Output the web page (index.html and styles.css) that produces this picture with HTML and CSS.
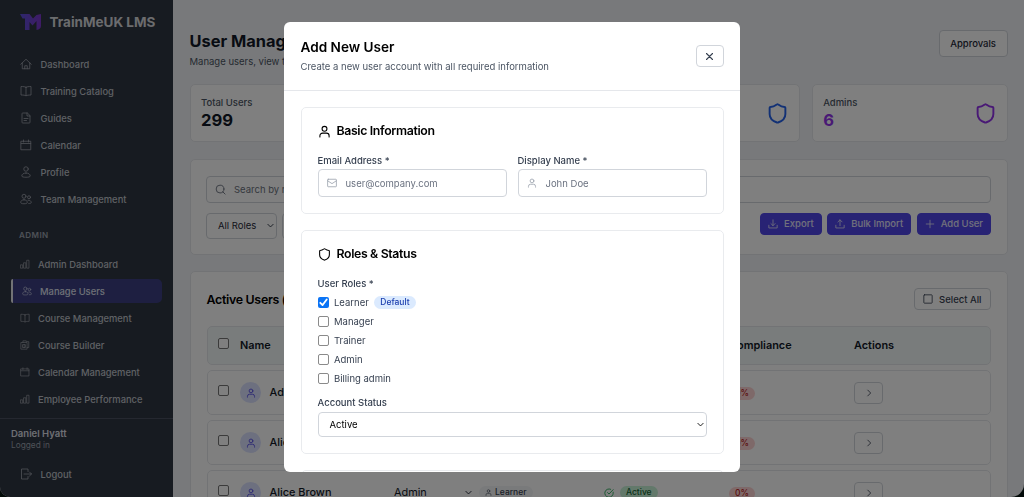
FILE: index.html
```
<!DOCTYPE html>
<html lang="en">
<head>
    <meta charset="UTF-8">
    <meta name="viewport" content="width=device-width, initial-scale=1.0">
    <title>TrainMeUK LMS - User Management</title>
    <link rel="stylesheet" href="styles.css">
</head>
<body>
    <svg class="sprite" aria-hidden="true">
        <symbol id="i-home" viewBox="0 0 24 24"><path d="M1.500 12.500 12 2.500l10.500 10M4.500 10v11.500h15V10M9.500 21.500v-6h5v6"/></symbol>
        <symbol id="i-book" viewBox="0 0 24 24"><path d="M12 4.500C10 3.500 7 3 2 3v17c5 0 8 .5 10 1.500 2-1 5-1.500 10-1.500V3c-5 0-8 .5-10 1.500zm0 0v17"/></symbol>
        <symbol id="i-file" viewBox="0 0 24 24"><path d="M14 2H5.500A1.500 1.500 0 0 0 4 3.500v17A1.500 1.500 0 0 0 5.500 22h13a1.500 1.500 0 0 0 1.500-1.500V8zM14 2v6h6M8 13h8M8 17h5"/></symbol>
        <symbol id="i-cal" viewBox="0 0 24 24"><path d="M2.500 4.500h19v17h-19zM2.500 9h19M7 2v4M17 2v4"/></symbol>
        <symbol id="i-profile" viewBox="0 0 24 24"><circle cx="12" cy="6" r="4.500"/><path d="M12 14c-5 0-8.500 2.500-8.500 6 0 1.500 3 2.500 8.500 2.500s8.500-1 8.500-2.500c0-3.500-3.500-6-8.500-6z"/></symbol>
        <symbol id="i-team" viewBox="0 0 24 24"><circle cx="8" cy="6.500" r="4"/><circle cx="18" cy="8.500" r="3"/><path d="M8 13.500c-4 0-6.500 2-6.500 5.500 0 1.500 2 2.500 6.500 2.500s6.500-1 6.500-2.500c0-3.500-2.500-5.500-6.500-5.500zM16 14.500c4-.5 6.500 1.500 6.500 5 0 1-2 1.500-5 1.500"/></symbol>
        <symbol id="i-chart" viewBox="0 0 24 24"><path d="M2 14h4.500v8H2zM9.500 9H14v13H9.500zM17 3h4.500v19H17z"/></symbol>
        <symbol id="i-build" viewBox="0 0 24 24"><path d="M3 6h14v16H3zM7 6V2h8v2h6v14h-4M7 11h6v7H7zM10 11v7"/></symbol>
        <symbol id="i-logout" viewBox="0 0 24 24"><path d="M16 7V2H3v20h13v-5M8 12h15M19 8l4 4-4 4"/></symbol>
        <symbol id="i-user" viewBox="0 0 24 24"><circle cx="12" cy="7" r="4.500"/><path d="M3.500 22v-2a5 5 0 0 1 5-5h7a5 5 0 0 1 5 5v2"/></symbol>
        <symbol id="i-shield" viewBox="0 0 24 24"><path d="M21 12.500c0 5.500-3.800 8.200-8.400 9.800a1.500 1.500 0 0 1-1.200 0C6.800 20.700 3 18 3 12.500V5.500a1 1 0 0 1 1-1c2.500 0 5-1.200 7.200-2.800a1.200 1.200 0 0 1 1.600 0C15 3.300 17.500 4.500 20 4.500a1 1 0 0 1 1 1z"/></symbol>
        <symbol id="i-mail" viewBox="0 0 24 24"><rect x="1.500" y="3" width="21" height="18" rx="1.500"/><path d="m2 7 10 6.500L22 7"/></symbol>
        <symbol id="i-search" viewBox="0 0 24 24"><circle cx="11" cy="11" r="8.500"/><path d="m17 17 5 5"/></symbol>
        <symbol id="i-down" viewBox="0 0 24 24"><path d="M12 2v14M7 11l5 5 5-5M2 15v6.500h20V15"/></symbol>
        <symbol id="i-up" viewBox="0 0 24 24"><path d="M12 16V2M7 7l5-5 5 5M2 15v6.500h20V15"/></symbol>
        <symbol id="i-plus" viewBox="0 0 24 24"><path d="M12 3v18M3 12h18"/></symbol>
        <symbol id="i-x" viewBox="0 0 24 24"><path d="m4 4 16 16M20 4 4 20"/></symbol>
        <symbol id="i-square" viewBox="0 0 24 24"><rect x="2" y="2" width="20" height="20" rx="1.500"/></symbol>
        <symbol id="i-right" viewBox="0 0 24 24"><path d="m9 5 7 7-7 7"/></symbol>
        <symbol id="i-chev" viewBox="0 0 24 24"><path d="m3 8 9 9 9-9"/></symbol>
        <symbol id="i-check" viewBox="0 0 24 24"><path d="M22 10v2a10 10 0 1 1-6-9M22 4 12 14.500l-3.500-3.500"/></symbol>
    </svg>

    <div class="app">
        <aside class="sidebar">
            <div class="brand">
                <svg class="logo" viewBox="0 0 21 16">
                    <defs>
                        <linearGradient id="lg" x1="0" x2="1"><stop offset="0" stop-color="#5b50d8"/><stop offset="1" stop-color="#7d37cc"/></linearGradient>
                    </defs>
                    <path fill="url(#lg)" d="M0 0h9.500L13 4.500 16.500 1 21 0v12q0 3-4.500 4V7l-4 4.500L9.500 8v8H5V4.500H2.500z"/>
                </svg>
                <span>TrainMeUK LMS</span>
            </div>
            <nav class="nav">
                <a><svg><use href="#i-home"/></svg>Dashboard</a>
                <a><svg><use href="#i-book"/></svg>Training Catalog</a>
                <a><svg><use href="#i-file"/></svg>Guides</a>
                <a><svg><use href="#i-cal"/></svg>Calendar</a>
                <a><svg><use href="#i-profile"/></svg>Profile</a>
                <a><svg><use href="#i-team"/></svg>Team Management</a>
            </nav>
            <div class="nav-label">ADMIN</div>
            <nav class="nav nav-admin">
                <a><svg><use href="#i-chart"/></svg>Admin Dashboard</a>
                <a class="active"><svg><use href="#i-team"/></svg>Manage Users</a>
                <a><svg><use href="#i-book"/></svg>Course Management</a>
                <a><svg><use href="#i-build"/></svg>Course Builder</a>
                <a><svg><use href="#i-cal"/></svg>Calendar Management</a>
                <a><svg><use href="#i-chart"/></svg>Employee Performance</a>
            </nav>
            <div class="account">
                <div class="account-name">Daniel Hyatt</div>
                <div class="account-state">Logged in</div>
                <nav class="nav"><a><svg><use href="#i-logout"/></svg>Logout</a></nav>
            </div>
        </aside>

        <main class="main">
            <header class="page-head">
                <div>
                    <h1>User Management</h1>
                    <p>Manage users, view training</p>
                </div>
                <button class="btn btn-lg">Approvals</button>
            </header>

            <section class="stats">
                <div class="card stat"><div><span>Total Users</span><b>299</b></div></div>
                <div class="card stat"></div>
                <div class="card stat"><div></div><svg class="blue"><use href="#i-shield"/></svg></div>
                <div class="card stat"><div><span>Admins</span><b class="purple">6</b></div><svg class="purple"><use href="#i-shield"/></svg></div>
            </section>

            <section class="card filters">
                <div class="search"><svg><use href="#i-search"/></svg>Search by name</div>
                <div class="filter-row">
                    <div class="select">All Roles<svg><use href="#i-chev"/></svg></div>
                    <div class="select"></div>
                    <div class="actions">
                        <button class="btn primary"><svg><use href="#i-down"/></svg>Export</button>
                        <button class="btn primary"><svg><use href="#i-up"/></svg>Bulk Import</button>
                        <button class="btn primary"><svg><use href="#i-plus"/></svg>Add User</button>
                    </div>
                </div>
            </section>

            <section class="card users">
                <div class="users-head">
                    <h2>Active Users (299)</h2>
                    <button class="btn"><svg><use href="#i-square"/></svg>Select All</button>
                </div>
                <div class="row row-head">
                    <i class="box"></i><span>Name</span><span></span><span></span><span>Compliance</span><span>Actions</span>
                </div>
                <div class="row">
                    <i class="box"></i>
                    <div class="name"><em><svg><use href="#i-user"/></svg></em>Adrian</div>
                    <div></div>
                    <div></div>
                    <div><span class="pill red">0%</span></div>
                    <div><button class="btn go"><svg><use href="#i-right"/></svg></button></div>
                </div>
                <div class="row">
                    <i class="box"></i>
                    <div class="name"><em><svg><use href="#i-user"/></svg></em>Alice</div>
                    <div></div>
                    <div></div>
                    <div><span class="pill red">0%</span></div>
                    <div><button class="btn go"><svg><use href="#i-right"/></svg></button></div>
                </div>
                <div class="row">
                    <i class="box"></i>
                    <div class="name"><em><svg><use href="#i-user"/></svg></em>Alice Brown</div>
                    <div class="role"><span class="role-pick">Admin<svg><use href="#i-chev"/></svg></span><span class="pill gray"><svg><use href="#i-user"/></svg>Learner</span></div>
                    <div class="status"><svg><use href="#i-check"/></svg><span class="pill green">Active</span></div>
                    <div><span class="pill red">0%</span></div>
                    <div><button class="btn go"><svg><use href="#i-right"/></svg></button></div>
                </div>
            </section>
        </main>
    </div>

    <div class="overlay">
        <div class="modal">
            <header class="modal-head">
                <div>
                    <h2>Add New User</h2>
                    <p>Create a new user account with all required information</p>
                </div>
                <button class="btn close"><svg><use href="#i-x"/></svg></button>
            </header>
            <div class="modal-body">
                <section class="panel">
                    <h3><svg><use href="#i-user"/></svg>Basic Information</h3>
                    <div class="fields">
                        <div>
                            <label>Email Address *</label>
                            <div class="input"><svg><use href="#i-mail"/></svg>user@company.com</div>
                        </div>
                        <div>
                            <label>Display Name *</label>
                            <div class="input"><svg><use href="#i-user"/></svg>John Doe</div>
                        </div>
                    </div>
                </section>
                <section class="panel">
                    <h3><svg><use href="#i-shield"/></svg>Roles &amp; Status</h3>
                    <label>User Roles *</label>
                    <ul class="roles">
                        <li><i class="box checked"><svg viewBox="0 0 12 12"><path d="m2.500 6.300 2.500 2.500 4.500-6"/></svg></i>Learner<span class="pill default">Default</span></li>
                        <li><i class="box"></i>Manager</li>
                        <li><i class="box"></i>Trainer</li>
                        <li><i class="box"></i>Admin</li>
                        <li><i class="box"></i>Billing admin</li>
                    </ul>
                    <label>Account Status</label>
                    <div class="status-select">Active<svg><use href="#i-chev"/></svg></div>
                </section>
                <section class="panel"></section>
            </div>
        </div>
    </div>
</body>
</html>
```
FILE: styles.css
```
* {
    box-sizing: border-box;
}
body {
    margin: 0;
    height: 497px;
    overflow: hidden;
    background: #041410;
    font-family: Inter, "Liberation Sans", sans-serif;
    font-size: 9.5px;
    line-height: 15px;
    color: #374151;
}
h1, h2, h3, p, ul {
    margin: 0;
    padding: 0;
}
svg {
    display: block;
    flex: none;
    fill: none;
    stroke: currentColor;
    stroke-width: 2;
    stroke-linecap: round;
    stroke-linejoin: round;
}
.sprite {
    position: absolute;
    width: 0;
    height: 0;
}
.app {
    display: flex;
    height: 497px;
    overflow: hidden;
    border-radius: 0 0 13px 10px;
    background: #f1f3f7;
}

/* sidebar */
.sidebar {
    width: 173px;
    flex: none;
    display: flex;
    flex-direction: column;
    background: #2f3642;
    color: #dcdfe4;
}
.brand {
    display: flex;
    align-items: center;
    gap: 8.5px;
    height: 44px;
    padding-left: 20px;
    font-size: 13.5px;
    font-weight: 700;
    color: #d6d8dc;
}
.logo {
    width: 21px;
    height: 16px;
    stroke: none;
}
.nav {
    padding: 0 11px;
}
.brand + .nav {
    margin-top: 8px;
}
.nav a {
    display: flex;
    align-items: center;
    height: 24px;
    margin-bottom: 3px;
    padding-left: 9px;
    gap: 8.5px;
    font-size: 9.4px;
    font-weight: 500;
    color: #bfc3ca;
}
.nav svg {
    width: 12px;
    height: 12px;
    stroke-width: 1.6;
    color: #a0a5ae;
}
.nav-label {
    margin: 16px 0 12px 19px;
    font-size: 8.1px;
    line-height: 10px;
    font-weight: 600;
    letter-spacing: .4px;
    color: #9ca3af;
}
.nav-admin a {
    gap: 8px;
}
.nav-admin svg {
    width: 10px;
    height: 10px;
}
.nav-admin .active {
    border-left: 2px solid #e5e7eb;
    border-radius: 2px 5px 5px 2px;
    background: #3c3f83;
    color: #dfe1ee;
}
.active svg {
    color: #c5c8e0;
}
.account {
    margin-top: 4px;
    padding-top: 8px;
    border-top: 1px solid #4a5160;
}
.account-name {
    padding-left: 11px;
    line-height: 13px;
    font-weight: 600;
}
.account-state {
    padding-left: 11px;
    font-size: 8.3px;
    line-height: 11px;
    color: #9ca3af;
}
.account .nav {
    margin-top: 11px;
}

/* page */
.main {
    flex: 1;
    padding: 30px 16.5px 0;
}
.page-head {
    display: flex;
    justify-content: space-between;
    align-items: flex-start;
    height: 54px;
}
.page-head h1 {
    font-size: 16.4px;
    line-height: 22px;
    font-weight: 700;
    color: #111827;
}
.page-head p {
    margin-top: 2px;
    color: #4b5563;
}
.btn {
    display: flex;
    align-items: center;
    justify-content: center;
    gap: 6px;
    height: 22px;
    padding: 0 8px;
    border: 1px solid #d1d5db;
    border-radius: 4px;
    background: #fff;
    font-family: inherit;
    font-size: 9.5px;
    font-weight: 500;
    color: #374151;
}
.btn svg {
    width: 10px;
    height: 10px;
}
.btn-lg {
    height: 27px;
    padding: 0 10.5px;
    color: #1f2937;
}
.btn.primary {
    padding: 0 7px;
    border-color: #5146e8;
    background: #5146e8;
    color: #e2e2f8;
}
.card {
    border: 1px solid #e5e7eb;
    border-radius: 5px;
    background: #fff;
}
.stats {
    display: grid;
    grid-template-columns: repeat(4, 1fr);
    gap: 11.5px;
}
.stat {
    display: flex;
    justify-content: space-between;
    align-items: center;
    height: 58px;
    padding: 0 11px 0 10.5px;
}
.stat span, .stat b {
    display: block;
}
.stat span {
    line-height: 14px;
    color: #4b5563;
    font-weight: 500;
}
.stat b {
    font-size: 16.6px;
    line-height: 20px;
    color: #111827;
}
.stat svg {
    width: 21px;
    height: 21px;
    stroke-width: 2.2;
}
.blue {
    color: #2563eb;
}
.stat .purple {
    color: #9333ea;
}
.filters {
    height: 96px;
    margin-top: 17px;
    padding: 15.5px;
}
.search {
    display: flex;
    align-items: center;
    gap: 8px;
    height: 27px;
    padding-left: 8px;
    border: 1px solid #d1d5db;
    border-radius: 4px;
    color: #6b7280;
}
.search svg {
    width: 11px;
    height: 11px;
}
.filter-row {
    display: flex;
    gap: 5px;
    margin-top: 10px;
}
.select {
    display: flex;
    align-items: center;
    justify-content: space-between;
    width: 71px;
    height: 26px;
    padding: 0 2px 0 11px;
    border: 1px solid #d1d5db;
    border-radius: 4px;
    color: #1f2937;
}
.select svg, .role-pick svg, .status-select svg {
    width: 7px;
    height: 7px;
    stroke-width: 3;
}
.actions {
    display: flex;
    gap: 5.500px;
    margin-left: auto;
}
.users {
    height: 260px;
    margin-top: 16px;
    padding: 16px;
}
.users-head {
    display: flex;
    justify-content: space-between;
    height: 38px;
}
.users-head h2 {
    font-size: 12.4px;
    line-height: 23px;
    font-weight: 600;
    letter-spacing: -.3px;
    color: #000;
}
.row {
    display: grid;
    grid-template-columns: 22px 154px 210px 125px 125px 1fr;
    align-items: center;
    height: 45px;
    margin-bottom: 5px;
    padding-left: 10.5px;
    border: 1px solid #e5e7eb;
    border-radius: 5px;
}
.row-head {
    height: 39px;
    background: #f3f9f8;
    font-size: 10.9px;
    font-weight: 600;
    color: #111827;
}
.box {
    display: block;
    width: 11px;
    height: 11px;
    border: 1px solid #8a8a8a;
    border-radius: 2px;
    background: #fff;
}
.row .box {
    margin-bottom: 4px;
    border-color: #767676;
}
.name {
    display: flex;
    align-items: center;
    gap: 8.5px;
    font-size: 10.9px;
    font-weight: 500;
    color: #111827;
}
.name em {
    display: flex;
    align-items: center;
    justify-content: center;
    width: 21px;
    height: 21px;
    border-radius: 50%;
    background: #dbe1ff;
    color: #4f46e5;
}
.name svg {
    width: 10px;
    height: 10px;
}
.role, .status {
    display: flex;
    align-items: center;
}
.role-pick {
    display: flex;
    align-items: center;
    justify-content: space-between;
    width: 78px;
    margin-right: 7px;
    font-size: 10.9px;
    color: #111827;
}
.status svg {
    width: 10px;
    height: 10px;
    margin-right: 6px;
    color: #16a34a;
}
.pill {
    display: inline-flex;
    align-items: center;
    height: 13px;
    padding: 0 6px;
    border-radius: 7px;
    font-size: 8.500px;
    font-weight: 500;
}
.pill.gray {
    gap: 3px;
    background: #f3f4f6;
    color: #374151;
}
.pill svg {
    width: 7px;
    height: 7px;
}
.pill.green {
    background: #c6f3d6;
    color: #166534;
}
.pill.red {
    background: #fdd3d3;
    color: #b91c1c;
}
.go {
    width: 29px;
}

/* modal */
.overlay {
    position: fixed;
    inset: 0;
    display: flex;
    justify-content: center;
    align-items: flex-start;
    padding-top: 22px;
    background: rgba(0, 0, 0, .5);
}
.modal {
    width: 456px;
    height: 450px;
    overflow: hidden;
    border-radius: 6px;
    background: #fff;
}
.modal-head {
    display: flex;
    justify-content: space-between;
    align-items: center;
    height: 69px;
    padding: 0 16.5px;
    border-bottom: 1px solid #e5e7eb;
}
.modal-head h2 {
    font-size: 13.6px;
    line-height: 19px;
    font-weight: 600;
    color: #000;
}
.modal-head p {
    margin-top: 2px;
    color: #4b5563;
}
.close {
    width: 28px;
}
.close svg {
    width: 9px;
    height: 9px;
    stroke-width: 3;
}
.modal-body {
    padding: 16px 16.5px 0;
}
.panel {
    margin-bottom: 16px;
    padding: 15px 16px 16px;
    border: 1px solid #e9ebee;
    border-radius: 5px;
}
.panel h3 {
    display: flex;
    align-items: center;
    gap: 6px;
    margin-bottom: 14px;
    font-size: 12.3px;
    line-height: 16px;
    font-weight: 600;
    letter-spacing: -.35px;
    color: #000;
}
.panel h3 svg {
    width: 13px;
    height: 13px;
}
.panel label {
    display: block;
    font-weight: 500;
}
.fields {
    display: grid;
    grid-template-columns: 1fr 1fr;
    gap: 11px;
}
.input {
    display: flex;
    align-items: center;
    gap: 9px;
    height: 28px;
    margin-top: 1px;
    padding-left: 8px;
    border: 1px solid #d1d5db;
    border-radius: 4px;
    color: #6b7280;
}
.input svg {
    width: 10px;
    height: 10px;
    color: #9ca3af;
}
.roles {
    margin: 2px 0 7px;
    list-style: none;
}
.roles li {
    display: flex;
    align-items: center;
    gap: 5.5px;
    height: 19px;
}
.box.checked {
    border: 0;
    background: #0b74f5;
}
.box.checked svg {
    width: 11px;
    height: 11px;
    color: #fff;
}
.pill.default {
    background: #dbeafe;
    color: #1e40af;
}
.status-select {
    display: flex;
    align-items: center;
    justify-content: space-between;
    height: 25px;
    margin-top: 2px;
    padding: 0 2px 0 11px;
    border: 1px solid #d1d5db;
    border-radius: 4px;
    color: #000;
}
```
